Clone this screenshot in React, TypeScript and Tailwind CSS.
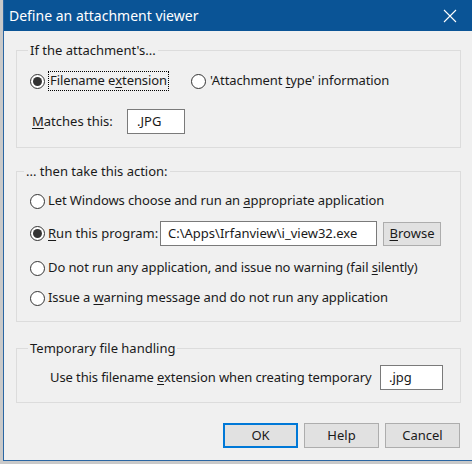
import React from "react";

const font = { fontFamily: '"Noto Sans", "Open Sans", Arial, sans-serif' };

function Radio({ checked = false }: { checked?: boolean }) {
  return (
    <span className="flex h-[15px] w-[15px] shrink-0 items-center justify-center rounded-full border border-[#333333] bg-white">
      {checked && <span className="h-[9px] w-[9px] rounded-full bg-[#333333]" />}
    </span>
  );
}

function Key({ children }: { children: React.ReactNode }) {
  return <span className="underline decoration-1 underline-offset-2">{children}</span>;
}

function Group({ title, legendClass, children }: { title: string; legendClass: string; children: React.ReactNode }) {
  return (
    <fieldset className="mx-[12px] mr-[11px] border border-[#dcdcdc] px-0">
      <legend className={`${legendClass} whitespace-nowrap px-[2px] text-[13px] leading-[19px] text-[#1a1a1a]`}>{title}</legend>
      {children}
    </fieldset>
  );
}

function Button({ children, focused = false }: { children: React.ReactNode; focused?: boolean }) {
  return (
    <button
      type="button"
      className={`flex h-[25px] w-[75px] items-center justify-center bg-[#e1e1e1] text-[13px] text-[#1a1a1a] ${
        focused ? "border-2 border-[#0078d7]" : "border border-[#adadad]"
      }`}
    >
      {children}
    </button>
  );
}

export default function App() {
  return (
    <div className="flex h-[464px] w-[472px] flex-col overflow-hidden bg-[#c9c9c9] pl-[3px]" style={font}>
      <div className="flex h-[461px] flex-col whitespace-nowrap border-b border-l border-[#2a66a3] bg-[#f0f0f0]">
        {/* title bar */}
        <div className="flex h-[31px] shrink-0 items-center justify-between bg-[#0a5496] pl-[5px] pr-[15px]">
          <span className="text-[14px] text-white">Define an attachment viewer</span>
          <svg width="14" height="14" viewBox="0 0 14 14" stroke="white" strokeWidth="1.1">
            <path d="M1 1 13 13M13 1 1 13" />
          </svg>
        </div>

        {/* group 1 */}
        <div className="mt-[10px]">
          <Group title="If the attachment's..." legendClass="ml-[11px]">
            <div className="mt-[11px] flex h-[20px] items-center pl-[13px] text-[13px] tracking-[-0.1px] text-[#1a1a1a]">
              <Radio checked />
              <span className="ml-[3px] flex h-[20px] items-center border border-dotted border-black px-[1px]">
                Filename e<Key>x</Key>tension
              </span>
              <span className="ml-[22px]">
                <Radio />
              </span>
              <span className="ml-[4px]">
                'Attachment <Key>t</Key>ype' information
              </span>
            </div>
            <div className="mb-[13px] mt-[18px] flex h-[25px] items-center pl-[15px] text-[13px] text-[#1a1a1a]">
              <span className="w-[95px]">
                <Key>M</Key>atches this:
              </span>
              <span className="flex h-[25px] w-[58px] items-center border border-[#7a7a7a] bg-white pl-[9px]">.JPG</span>
            </div>
          </Group>
        </div>

        {/* group 2 */}
        <div className="mt-[14px]">
          <Group title="... then take this action:" legendClass="ml-[7px]">
            <div className="flex flex-col pl-[13px] text-[13px] text-[#1a1a1a]">
              <div className="mt-[10px] flex h-[20px] items-center gap-[3px] tracking-[-0.1px]">
                <Radio />
                <span>
                  Let Windows choose and run an <Key>a</Key>ppropriate application
                </span>
              </div>
              <div className="mt-[10px] flex h-[25px] items-center">
                <Radio checked />
                <span className="ml-[3px] w-[112px]">
                  <Key>R</Key>un this program:
                </span>
                <span className="flex h-[25px] w-[217px] items-center border border-[#7a7a7a] bg-white pl-[7px]">
                  C:\Apps\Irfanview\i_view32.exe
                </span>
                <button
                  type="button"
                  className="ml-[6px] flex h-[24px] w-[58px] items-center justify-center border border-[#adadad] bg-[#e1e1e1]"
                >
                  <Key>B</Key>rowse
                </button>
              </div>
              <div className="mt-[12px] flex h-[20px] items-center gap-[3px] tracking-[-0.1px]">
                <Radio />
                <span>
                  Do not run any application, and issue no warning (fail <Key>s</Key>ilently)
                </span>
              </div>
              <div className="mb-[13px] mt-[10px] flex h-[20px] items-center gap-[3px] tracking-[-0.1px]">
                <Radio />
                <span>
                  Issue a <Key>w</Key>arning message and do not run any application
                </span>
              </div>
            </div>
          </Group>
        </div>

        {/* group 3 */}
        <div className="mt-[17px]">
          <Group title="Temporary file handling" legendClass="ml-[11px]">
            <div className="mb-[12px] mt-[7px] flex h-[25px] items-center pl-[33px] text-[13px] text-[#1a1a1a]">
              <span className="w-[330px] tracking-[-0.1px]">
                Use this filename <Key>e</Key>xtension when creating temporary
              </span>
              <span className="flex h-[25px] w-[63px] items-center border border-[#7a7a7a] bg-white pl-[8px]">.jpg</span>
            </div>
          </Group>
        </div>

        {/* buttons */}
        <div className="mr-[12px] mt-[20px] flex justify-end gap-[6px]">
          <Button focused>OK</Button>
          <Button>Help</Button>
          <Button>Cancel</Button>
        </div>
      </div>
    </div>
  );
}
